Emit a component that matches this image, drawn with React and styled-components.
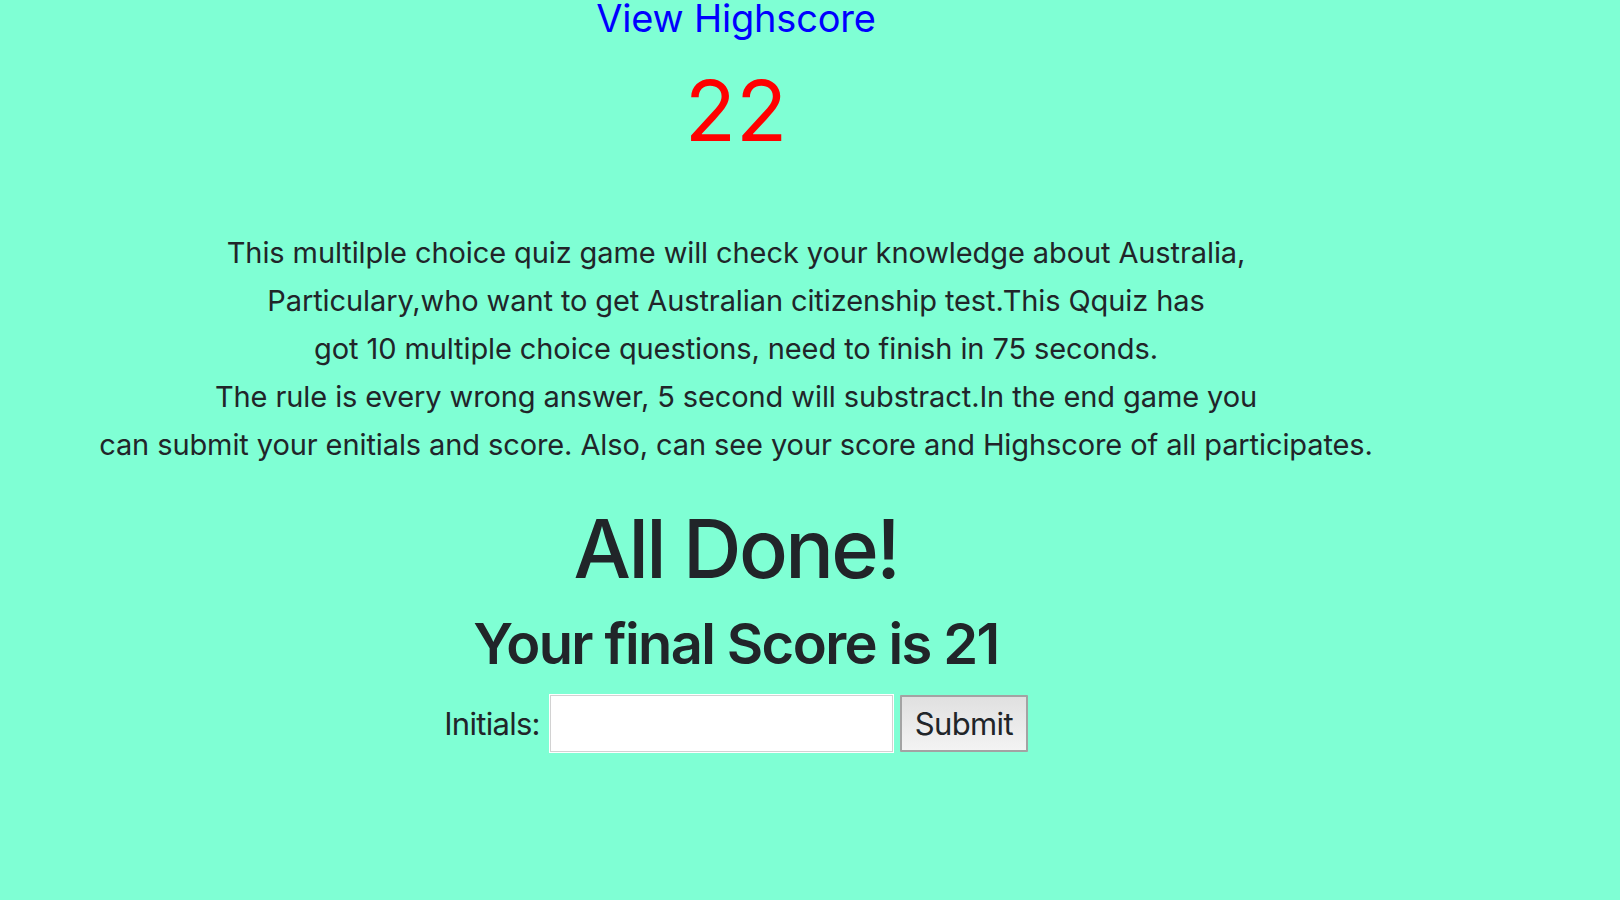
import React from 'react';
import styled, { createGlobalStyle } from 'styled-components';

const GlobalStyle = createGlobalStyle`
  html, body {
    margin: 0;
    padding: 0;
    background: #7fffd4;
  }
  body {
    font-family: Inter, "Noto Sans", "Liberation Sans", sans-serif;
    color: #212529;
  }
`;

const Page = styled.main`
  width: 1472px;
  text-align: center;
  padding-bottom: 90px;
`;

const HighscoreLink = styled.a`
  display: block;
  margin-top: -1px;
  font-size: 38px;
  line-height: 1;
  color: #0000ff;
  text-decoration: none;
  letter-spacing: -0.2px;
`;

const Timer = styled.div`
  margin-top: 32px;
  font-size: 84px;
  line-height: 1;
  font-weight: 400;
  color: #ff0000;
`;

const Intro = styled.p`
  margin: 76px 0 0;
  font-size: 29px;
  line-height: 48px;
  letter-spacing: -0.1px;
`;

const Result = styled.section`
  margin-top: 36px;
`;

const DoneTitle = styled.h1`
  margin: 0;
  font-size: 81px;
  line-height: 1.1;
  font-weight: 500;
  letter-spacing: -2.6px;
`;

const FinalScore = styled.h2`
  margin: 20px 0 0;
  font-size: 56px;
  line-height: 1.1;
  font-weight: 600;
  letter-spacing: -1.6px;
`;

const Form = styled.form`
  margin-top: 18px;
  display: flex;
  justify-content: center;
  align-items: center;
  gap: 6px;
`;

const Label = styled.label`
  margin-right: 3px;
  font-size: 31px;
  letter-spacing: -0.7px;
`;

const TextInput = styled.input`
  box-sizing: border-box;
  width: 345px;
  height: 59px;
  border: 1px solid #ffffff;
  box-shadow: inset 0 0 0 1px #d2d2d2;
  background: #ffffff;
  font-size: 28px;
  padding: 0 8px;
  outline: none;
`;

const Button = styled.button`
  box-sizing: border-box;
  width: 128px;
  height: 57px;
  border: 2px solid #a3a3a3;
  border-radius: 1px;
  background: linear-gradient(#e0e0e0, #f3f3f3);
  font-family: Inter, "Noto Sans", sans-serif;
  font-size: 31px;
  letter-spacing: -0.6px;
  color: #212529;
  padding: 0;
`;

export default function App() {
  return (
    <>
      <GlobalStyle />
      <Page>
        <HighscoreLink href="#highscore">View Highscore</HighscoreLink>
        <Timer>22</Timer>
        <Intro>
          This multilple choice quiz game will check your knowledge about Australia,
          <br />
          Particulary,who want to get Australian citizenship test.This Qquiz has
          <br />
          got 10 multiple choice questions, need to finish in 75 seconds.
          <br />
          The rule is every wrong answer, 5 second will substract.In the end game you
          <br />
          can submit your enitials and score. Also, can see your score and Highscore of all participates.
        </Intro>
        <Result>
          <DoneTitle>All Done!</DoneTitle>
          <FinalScore>Your final Score is 21</FinalScore>
          <Form onSubmit={(e) => e.preventDefault()}>
            <Label htmlFor="initials">Initials:</Label>
            <TextInput id="initials" type="text" />
            <Button type="submit">Submit</Button>
          </Form>
        </Result>
      </Page>
    </>
  );
}
